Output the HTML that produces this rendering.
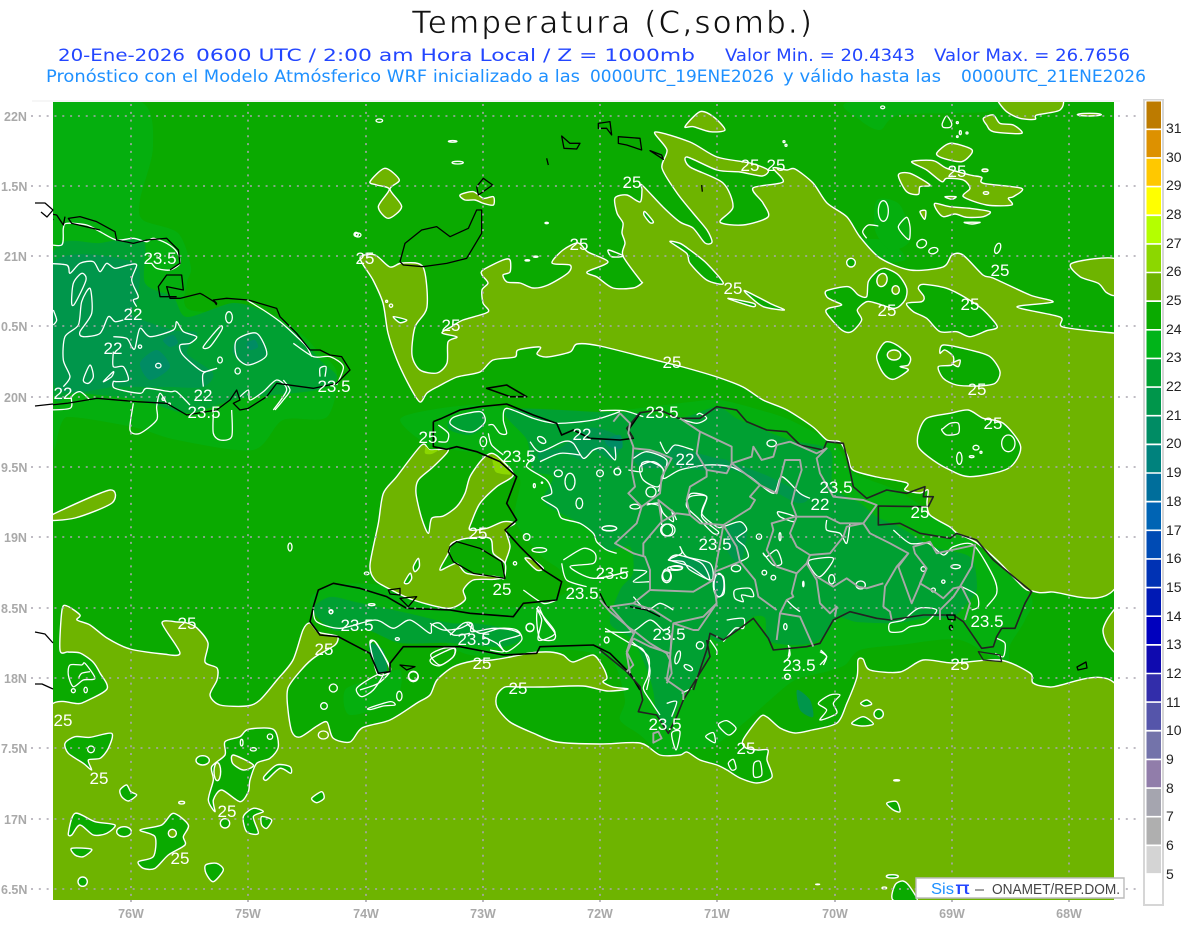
<!DOCTYPE html>
<html><head><meta charset="utf-8"><title>Temperatura</title>
<style>
html,body{margin:0;padding:0;background:#fff;width:1200px;height:927px;overflow:hidden}
svg{display:block}
svg *{vector-effect:non-scaling-stroke}
text{font-family:"Liberation Sans",sans-serif;white-space:pre}
.t{font-family:"DejaVu Sans",sans-serif}
.o{fill:#6eb400;stroke:#fff;stroke-width:1.4;stroke-linejoin:round}
.g{fill:#0aaa00;stroke:#fff;stroke-width:1.4;stroke-linejoin:round}
.w{fill:none;stroke:#fff;stroke-width:1.3;stroke-linejoin:round}
.k{fill:none;stroke:#000;stroke-width:1.3;stroke-linejoin:round}
.p{fill:none;stroke:#a8a8a8;stroke-width:1.9;stroke-linejoin:round}
.l{fill:#fff;font-size:17px;text-anchor:middle}
.a{fill:#a9a9a9;font-size:12.5px;font-weight:bold}
.c{fill:#222;font-size:14px}
</style></head><body>
<svg width="1200" height="927" viewBox="0 0 1200 927" xmlns="http://www.w3.org/2000/svg">
<rect width="1200" height="927" fill="#fff"/>
<text class="t" x="412" y="33" font-size="31" fill="#111" stroke="#fff" stroke-width=".7" textLength="400" lengthAdjust="spacing">Temperatura (C,somb.)</text>
<g class="t" font-size="17" fill="#2346ff">
<text class="t" x="58" y="61" textLength="127" lengthAdjust="spacingAndGlyphs">20-Ene-2026</text>
<text class="t" x="196" y="61" textLength="499" lengthAdjust="spacingAndGlyphs">0600 UTC / 2:00 am Hora Local / Z = 1000mb</text>
<text class="t" x="725" y="61" textLength="190" lengthAdjust="spacingAndGlyphs">Valor Min. = 20.4343</text>
<text class="t" x="934" y="61" textLength="196" lengthAdjust="spacingAndGlyphs">Valor Max. = 26.7656</text>
</g>
<g class="t" font-size="16.5" fill="#1e90ff">
<text class="t" x="46" y="82" textLength="534" lengthAdjust="spacingAndGlyphs">Pronóstico con el Modelo Atmósferico WRF inicializado a las</text>
<text class="t" x="590" y="82" textLength="184" lengthAdjust="spacingAndGlyphs">0000UTC_19ENE2026</text>
<text class="t" x="783" y="82" textLength="158" lengthAdjust="spacingAndGlyphs">y válido hasta las</text>
<text class="t" x="961" y="82" textLength="185" lengthAdjust="spacingAndGlyphs">0000UTC_21ENE2026</text>
</g>
<line x1="32" y1="101" x2="1120" y2="101" stroke="#eee"/>
<defs><clipPath id="m"><rect x="53" y="102" width="1061" height="798"/></clipPath></defs>
<g clip-path="url(#m)">
<rect x="53" y="102" width="1061" height="798" fill="#0aaa00"/>

<!-- shaded layers -->
<g fill="#05af0e">
<polygon points="53,102 141,102 153,147 140,200 143,220 178,233 191,267 187,283 190,310 267,313 300,333 317,350 337,373 327,417 283,420 253,450 177,440 133,427 67,417 53,433"/>
<polygon points="400,420 430,410 480,405 540,412 580,415 625,410 690,402 720,400 760,410 790,420 835,445 850,470 870,480 905,495 975,545 1030,595 1025,620 1010,645 1005,665 960,640 900,645 860,650 845,665 825,672 795,680 770,700 745,722 715,745 690,750 670,760 640,735 620,720 625,700 615,665 600,655 570,650 530,655 470,655 440,640 400,630 340,630 320,620 310,600 330,585 380,585 420,600 470,610 530,605 570,590 560,570 540,555 515,520 520,480 500,465 490,455 430,445"/>
<polygon points="770,190 800,195 810,230 830,240 885,240 905,260 860,262 840,240 790,240 775,220"/>
<polygon points="850,102 990,102 985,112 900,115 880,130 860,120"/>
<polygon points="770,300 800,300 820,325 790,340 775,330"/>
<polygon points="877,200 900,205 910,240 890,250 875,230"/>
<polygon points="345,690 370,680 400,670 395,700 350,715"/>
</g>
<g fill="#00a032">
<polygon points="53,253 100,243 143,240 145,283 173,297 187,317 233,303 267,313 300,337 320,360 337,377 317,390 253,397 233,400 187,413 140,400 77,393 53,393"/>
<polygon points="450,420 480,410 485,425 470,435 450,430"/>
<polygon points="507,410 527,440 533,470 553,477 543,500 560,513 580,523 593,533 607,550 630,547 633,573 620,590 610,623 633,640 647,670 653,690 657,713 667,730 680,700 690,687 707,657 710,637 720,642 740,627 753,617 765,618 768,640 790,645 813,643 827,633 837,617 857,622 897,623 930,617 953,617 970,600 977,587 970,557 933,547 900,527 877,517 860,503 833,487 830,450 790,440 740,420 717,407 680,418 640,413 600,412"/>
<polygon points="313,610 330,597 360,603 407,613 450,623 473,623 513,630 520,640 500,647 450,643 400,643 367,630 333,630"/>
</g>
<g fill="#00964b">
<polygon points="53,263 133,262 138,297 133,315 173,330 197,333 187,353 213,373 203,387 170,387 143,387 113,387 77,392 53,380"/>
<polygon points="237,340 257,333 267,353 248,365 233,353"/>
<polygon points="540,460 540,450 560,448 587,428 613,433 622,443 613,460 593,450 583,460 563,453"/>
<polygon points="633,453 662,453 667,467 640,467"/>
<polygon points="673,453 697,457 727,460 727,473 703,470 677,467"/>
<polygon points="673,445 697,453 733,463 770,477 807,497 797,503 767,487 733,470 700,470 670,457"/>
<polygon points="727,527 740,523 747,533 740,563 727,550"/>
<polygon points="670,560 687,557 710,563 712,580 690,570"/>
<polygon points="713,573 723,577 722,597 713,590"/>
<polygon points="797,690 810,700 813,717 800,710"/>
<polygon points="370,643 383,650 387,670 378,673 370,653"/>
</g>
<g fill="#008c64">
<polygon points="140,363 157,350 170,367 150,380"/>
<polygon points="163,340 173,335 178,343 170,347"/>
<polygon points="247,343 255,340 258,347 250,350"/>
<polygon points="605,440 620,435 622,448 610,447"/>
</g>

<!-- north body olive -->
<polygon class="o" points="360,258 373,280 383,303 388,333 397,360 410,387 420,402 427,393 437,387 457,377 480,372 493,360 515,357 518,350 540,347 537,354 547,357 570,352 577,344 600,346 663,362 683,367 717,377 743,387 763,400 787,410 813,427 827,440 840,442 848,457 853,470 877,477 907,483 905,490 920,493 928,490 927,503 930,515 950,527 957,533 977,543 1000,563 1023,587 1032,591 1050,592 1120,578 1120,333 1113,333 1063,327 1060,317 1017,307 1053,302 1030,295 993,278 983,275 963,255 952,255 943,267 910,270 880,258 860,237 847,217 827,203 813,183 795,169 787,170 773,168 783,182 753,188 763,203 768,217 743,225 720,222 733,207 723,183 690,167 687,157 717,170 740,172 762,176 768,170 750,163 717,157 690,142 655,132 667,150 662,168 677,193 693,213 707,230 712,242 705,243 693,228 680,222 663,207 642,185 642,190 640,202 627,195 615,198 617,213 623,223 622,233 625,243 623,256 640,280 642,283 633,288 613,288 597,277 587,272 608,262 588,252 578,243 563,250 552,263 570,265 568,273 548,285 533,288 520,283 507,282 503,275 510,272 510,260 503,260 483,270 482,275 488,283 482,290 483,303 488,312 463,320 451,327 442,333 457,337 448,342 447,363 437,373 420,370 412,355 415,327 427,307 423,267 402,263 390,267 375,255"/>
<g transform="translate(340,100) scale(.33333)">
<polygon class="g" points="990,425 1040,460 1050,490 1100,540 1150,550 1100,490 1050,450 1020,430"/>
<polygon class="g" points="1215,572 1290,610 1333,630 1270,620 1230,590"/>
<polygon class="g" points="1165,595 1240,610 1240,620 1190,605"/>
<polygon class="g" points="915,335 940,365 930,368 912,345"/>
<polygon class="g" points="160,650 200,660 180,668"/>
<polygon class="g" points="805,450 850,468 815,470"/>
<polygon class="o" points="1035,80 1080,35 1120,50 1155,90 1110,95 1060,80"/>
<polygon class="o" points="90,245 135,205 178,240 150,268 185,320 145,355 115,320 148,268 110,255"/>
<polygon class="o" points="360,285 400,275 430,295 460,290 460,315 430,310 405,300 375,300"/>
<ellipse class="w" cx="118" cy="62" rx="10" ry="5"/><ellipse class="w" cx="338" cy="124" rx="13" ry="2.5"/><ellipse class="w" cx="353" cy="188" rx="17" ry="4"/><circle class="w" cx="48" cy="403" r="6"/><ellipse class="w" cx="620" cy="369" rx="5" ry="2"/><ellipse class="w" cx="587" cy="470" rx="7" ry="2"/><ellipse class="w" cx="562" cy="481" rx="7" ry="2"/><circle class="w" cx="153" cy="617" r="5"/><circle class="w" cx="140" cy="604" r="3"/>
<polygon class="k" points="665,108 690,130 720,130 710,147 672,145"/>
<polyline class="k" points="620,175 625,195"/><polygon class="k" points="410,260 430,235 458,255 415,285"/>
<polygon class="k" points="180,485 195,430 245,390 290,380 330,410 385,385 410,330 425,330 425,400 380,475 320,490 250,500 190,495"/>
<polygon class="k" points="775,70 810,65 815,105 800,85 775,85"/><polygon class="k" points="835,110 900,115 905,150 860,135 835,130"/><polygon class="k" points="930,152 965,165 970,178"/>
<polyline class="k" points="1085,255 1087,275"/>
<polygon class="k" points="440,865 500,855 560,890 510,890" style="stroke-width:1.6"/>
</g>
<g transform="translate(770,100) scale(.33333)">
<polygon class="g" points="170,572 235,560 265,585 290,590 295,545 320,515 345,505 385,525 410,565 405,600 375,625 320,610 290,605 262,630 275,660 245,695 215,690 170,640 175,625 215,615 185,600 170,590"/>
<ellipse class="o" cx="336" cy="540" rx="15" ry="20" transform="rotate(15 336 540)"/><ellipse class="o" cx="377" cy="570" rx="11" ry="13"/>
<polygon class="g" points="410,610 455,605 462,590 445,565 460,553 530,565 590,595 640,630 682,680 650,692 600,710 560,695 510,695 470,655 430,635"/>
<polygon class="g" points="320,770 345,727 380,735 420,770 415,795 390,800 415,810 370,838 340,820"/>
<ellipse class="o" cx="372" cy="765" rx="20" ry="15"/>
<polygon class="g" points="510,760 520,735 600,750 660,770 690,815 675,850 625,858 560,855 520,835 505,800 545,795 550,770 525,750"/>
<polygon class="o" points="548,790 570,780 565,800"/>
<polygon class="o" points="905,490 1040,478 1040,580 1010,578 985,550 930,530"/>
<polygon class="o" points="685,5 685,-10 865,-10 870,30 800,45 795,58 750,55 710,35"/>
<polygon class="o" points="640,55 670,45 690,70 730,75 755,100 670,95 650,75"/>
<polygon class="o" points="500,160 540,130 600,145 605,160 575,185 520,175"/>
<polygon class="o" points="425,185 490,182 530,205 600,225 635,232 640,250 755,265 730,290 715,295 725,315 650,315 580,290 600,265 580,240 530,235 515,245 470,210"/>
<polygon class="o" points="385,225 420,220 480,255 450,260 445,283 410,275"/>
<polygon class="o" points="495,310 540,320 600,325 660,335 640,350 590,352 555,342 520,350 500,330"/>
<polygon class="o" points="525,290 558,290 545,298"/><polygon class="o" points="450,335 467,332 464,358"/>
<polygon class="o" points="583,367 630,367 605,372"/>
<ellipse class="o" cx="645" cy="211" rx="9" ry="4"/><ellipse class="o" cx="648" cy="279" rx="8" ry="4"/>
<ellipse class="o" cx="958" cy="44" rx="36" ry="4"/>
<circle class="g" cx="243" cy="488" r="13"/>
<ellipse class="w" cx="340" cy="333" rx="15" ry="31"/>
<polygon class="w" points="385,380 410,352 420,380 418,418 400,405"/>
<polyline class="w" points="290,415 278,395 295,375 325,378"/>
<ellipse class="w" cx="455" cy="431" rx="15" ry="12" transform="rotate(-25 455 431)"/>
<ellipse class="w" cx="490" cy="452" rx="14" ry="9" transform="rotate(-15 490 452)"/>
<polygon class="w" points="517,70 530,48 545,70 540,82 520,82"/>
<ellipse class="w" cx="683" cy="445" rx="8" ry="16" transform="rotate(20 683 445)"/>
<circle class="w" cx="562" cy="68" r="3"/><ellipse class="w" cx="571" cy="98" rx="3" ry="6"/><circle class="w" cx="591" cy="99" r="3"/><circle class="w" cx="562" cy="110" r="2.5"/><circle class="w" cx="42" cy="125" r="3"/><circle class="w" cx="48" cy="136" r="3"/><ellipse class="w" cx="338" cy="22" rx="6" ry="4"/>
</g>

<!-- Haiti NW olive -->
<g transform="translate(300,390) scale(.33333)">
<polygon class="o" points="365,165 390,180 445,180 400,230 355,270 348,310 365,385 385,430 395,385 430,378 470,350 495,310 510,260 545,210 575,190 605,210 640,255 590,290 540,340 515,395 510,420 560,415 610,395 645,400 618,420 630,470 615,520 612,560 580,568 520,570 490,600 495,630 445,655 340,630 265,595 225,570 210,525 235,400 250,310 290,260"/>
<polygon class="g" points="420,540 445,490 455,460 500,445 570,445 580,490 615,520 612,565 590,560 500,550 470,520"/>
<polygon fill="#8cd700" points="578,200 605,215 635,252 590,248 580,225"/>
<polygon fill="#8cd700" points="378,170 390,180 415,180 395,192 375,190"/>
<polygon class="g" points="340,530 355,505 358,530 345,545"/><polygon class="g" points="313,578 330,550 335,565 325,580"/>
<polygon class="o" points="675,505 700,510 730,535 710,540"/>
<ellipse class="w" cx="200" cy="550" rx="7" ry="4"/>
</g>

<!-- South body olive -->
<polygon class="o" points="45,718 82,703 107,689 100,673 93,662 80,653 68,652 60,650 62,610 67,606 80,615 77,620 90,625 107,638 130,649 163,654 180,653 162,623 178,622 187,623 197,628 208,643 205,662 217,668 217,680 210,695 220,705 247,706 260,700 277,680 293,660 303,630 310,623 318,632 333,635 338,637 335,645 315,657 303,668 288,688 288,710 292,732 300,737 317,726 327,722 333,738 350,742 362,728 390,720 417,703 430,695 437,680 453,667 473,661 492,660 510,657 530,653 550,652 563,655 573,662 593,655 603,667 607,678 603,682 613,687 628,689 607,691 583,686 543,687 518,687 505,687 497,695 497,707 510,722 533,733 557,742 600,744 640,743 660,755 680,755 687,752 700,760 717,765 727,770 740,778 757,783 772,777 767,760 768,750 758,750 746,748 743,740 760,717 767,717 780,728 795,733 812,730 837,723 847,703 857,677 858,660 863,659 870,670 900,672 923,660 953,663 1000,660 1030,673 1033,683 1050,687 1120,692 1120,905 45,905"/>
<polygon class="o" points="1120,608 1110,615 1103,630 1108,645 1120,653"/>
<polygon class="o" points="45,520 62,510 110,490 112,503 75,518"/>
<polygon class="g" points="893,900 895,885 903,881 910,887 917,902"/>
<ellipse class="w" cx="290" cy="547" rx="2" ry="4"/><ellipse class="w" cx="358" cy="235" rx="3" ry="2"/>

<g transform="translate(40,600) scale(.33333)">
<polygon class="g" points="75,430 105,410 150,412 215,400 205,445 180,475 145,480 155,510 130,490 85,460"/>
<polygon class="g" points="240,570 260,555 272,575 290,585 265,603 245,590"/>
<polygon class="g" points="515,500 555,465 555,425 600,410 625,388 700,388 715,440 690,475 650,490 630,540 625,575 600,605 545,570 520,600 525,635 505,600 520,540"/>
<polygon class="o" points="580,465 640,495 610,510 578,490"/>
<ellipse class="o" cx="532" cy="515" rx="10" ry="27"/>
<ellipse class="g" cx="488" cy="481" rx="20" ry="14"/>
<polygon class="g" points="672,530 710,495 750,500 752,520 720,505 680,540"/>
<polygon class="g" points="815,595 845,575 852,595 830,608"/>
<polygon class="g" points="610,650 640,625 670,635 640,650 655,700 620,695"/>
<polygon class="g" points="665,650 695,660 680,685 665,675"/>
<circle class="g" cx="555" cy="670" r="14"/>
<polygon class="g" points="85,700 105,640 165,665 225,675 200,700 160,705 120,675 95,705"/>
<ellipse class="g" cx="252" cy="695" rx="22" ry="15"/>
<polygon class="g" points="95,745 155,748 130,770 105,765"/>
<circle class="g" cx="128" cy="845" r="14"/>
<polygon class="g" points="300,690 365,675 400,640 445,675 430,710 435,735 385,765 345,805 310,805 295,785 340,770 345,710"/>
<circle class="o" cx="397" cy="700" r="12"/>
<polygon class="g" points="497,795 530,790 550,810 520,845 498,820"/>
<ellipse class="w" cx="153" cy="448" rx="10" ry="10"/><ellipse class="w" cx="640" cy="448" rx="9" ry="5"/><ellipse class="w" cx="690" cy="410" rx="8" ry="8"/><ellipse class="w" cx="605" cy="428" rx="4" ry="10"/><ellipse class="w" cx="425" cy="608" rx="9" ry="4"/><ellipse class="w" cx="850" cy="405" rx="15" ry="12"/><circle class="w" cx="852" cy="318" r="10"/><ellipse class="w" cx="880" cy="264" rx="12" ry="12"/><circle class="w" cx="1120" cy="230" r="15"/>
<polygon class="w" points="985,325 1050,305 1065,315 1030,318 995,328"/><ellipse class="w" cx="1078" cy="288" rx="8" ry="14"/>
<polygon class="w" points="950,265 1000,230 1030,222 1000,270 965,290"/>
<polygon class="w" points="1175,175 1240,145 1240,170 1200,197 1175,190"/>
<polygon class="w" points="990,125 1010,130 1050,210 1015,225 1000,180"/>
<polyline class="w" points="820,30 830,65 900,85 1005,60 1060,85 1110,60 1170,100 1175,75 1200,70 1240,105 1290,100"/>
<ellipse class="w" cx="873" cy="36" rx="5" ry="5"/>
<polygon class="w" points="90,195 125,195 135,190 165,235 130,240 100,260 85,225"/>
<polyline class="w" points="115,235 125,220 150,215"/>
<circle class="w" cx="100" cy="272" r="6"/><ellipse class="w" cx="137" cy="270" rx="5" ry="8"/>
</g>

<g transform="translate(450,600) scale(.33333)">
<polygon class="g" points="1205,370 1240,350 1270,372 1235,378"/>
<polygon class="g" points="1232,310 1250,300 1265,312 1245,318"/>
<circle class="g" cx="1286" cy="342" r="14"/>
<polygon class="g" points="1310,610 1340,605 1350,635 1330,630"/>
<ellipse class="g" cx="1327" cy="829" rx="18" ry="5"/>
<ellipse class="w" cx="1303" cy="864" rx="7" ry="3"/><ellipse class="w" cx="1340" cy="541" rx="9" ry="2"/><ellipse class="w" cx="1103" cy="853" rx="6" ry="1"/>
<polygon class="w" points="1105,310 1140,285 1170,285 1150,310 1160,340 1110,360 1130,330"/>
<polygon class="w" points="805,375 830,362 858,385 835,405"/>
<polygon class="w" points="767,410 790,398 795,428"/>
<polygon class="w" points="835,490 850,478 858,505 845,510"/>
<polygon class="w" points="912,490 930,485 935,525 912,530"/>
<polygon class="w" points="665,400 690,395 678,450"/>
<ellipse class="w" cx="470" cy="120" rx="7" ry="9"/>
<circle class="w" cx="240" cy="82" r="12"/><circle class="w" cx="750" cy="136" r="11"/>
<ellipse class="w" cx="683" cy="172" rx="7" ry="20" transform="rotate(15 683 172)"/>
<ellipse class="w" cx="715" cy="203" rx="14" ry="7" transform="rotate(30 715 203)"/>
<polygon class="w" points="260,25 285,55 315,100 265,120 275,60"/>
<polyline class="w" points="0,105 40,70 65,70 65,95 130,85 185,90 210,105 150,125 160,155 120,150"/>
<polyline class="w" points="465,95 545,95 600,60 640,90 660,80"/>
<polyline class="w" points="545,125 595,170 595,225 580,265 600,300 630,345"/>
<polyline class="w" points="650,310 680,305 665,350"/>
<polyline class="w" points="695,280 725,265"/>
<polyline class="w" points="780,120 800,150 800,165"/>
<polyline class="w" points="830,60 880,55 880,85 855,85 820,125"/>
<polyline class="w" points="1015,135 1020,165 1005,185"/><polyline class="w" points="1112,150 1130,170 1120,195"/><circle class="w" cx="1012" cy="230" r="8"/>
</g>

<!-- East blob -->
<g transform="translate(600,390) scale(.33333)">
<polygon class="g" points="955,130 980,85 1050,70 1105,60 1150,85 1210,100 1262,170 1225,235 1110,260 1040,235 985,200 955,170"/>
<polygon class="w" points="1030,115 1050,100 1075,100 1075,130 1040,135 1025,120"/>
<ellipse class="w" cx="1225" cy="160" rx="20" ry="25"/>
<ellipse class="w" cx="1078" cy="205" rx="8" ry="18"/>
<ellipse class="w" cx="1128" cy="173" rx="9" ry="7"/><ellipse class="w" cx="1115" cy="200" rx="7" ry="3"/><circle class="w" cx="1143" cy="187" r="3"/>
<polyline class="w" points="0,62 70,62 130,80"/>
<polyline class="w" points="235,85 290,100 320,85 300,70 290,75"/>
<polyline class="w" points="180,155 200,190 225,165 280,180"/>
<polyline class="w" points="100,205 140,185 200,210 190,265 240,240 320,225 390,230 450,260 520,310 545,260 600,310 630,325"/>
<polyline class="w" points="85,240 125,245 125,220 150,215 190,240 175,305"/>
<circle class="w" cx="153" cy="306" r="15"/><ellipse class="w" cx="52" cy="245" rx="10" ry="10"/>
<polyline class="w" points="140,345 175,340 190,370 220,395 215,360 230,390"/>
<ellipse class="w" cx="205" cy="420" rx="20" ry="18"/><ellipse class="w" cx="105" cy="350" rx="15" ry="7"/><ellipse class="w" cx="28" cy="415" rx="22" ry="8"/>
<polyline class="w" points="260,330 275,310 320,320 305,370 350,410 370,410 420,395 440,420 410,445 435,470 445,500 420,515"/>
<polygon class="w" points="205,510 245,490 240,470 260,500 330,520 335,570 270,540 250,515"/>
<ellipse class="w" cx="200" cy="560" rx="14" ry="18"/><ellipse class="w" cx="230" cy="533" rx="18" ry="6"/><ellipse class="w" cx="408" cy="535" rx="14" ry="10"/>
<polygon class="w" points="345,555 370,560 372,610 350,620 340,590"/>
<polygon class="w" points="405,600 450,595 460,620 425,615 430,635 405,625"/>
<polygon class="w" points="500,500 530,480 545,520 520,525 490,490"/>
<polygon class="w" points="535,365 585,380 580,395 540,380"/>
<polygon class="w" points="630,510 700,505 660,560 630,530"/>
<polyline class="w" points="680,390 680,420 720,430 740,460 750,400"/>
<polyline class="w" points="880,420 930,460 985,460 1030,495 1060,470 1120,465 1180,560 1190,610 1160,650"/>
<polyline class="w" points="1085,590 1130,615 1135,650 1115,660"/>
<polygon class="w" points="955,655 1010,660 975,700 930,710 905,725 870,725 870,700 910,690"/>
<ellipse class="w" cx="477" cy="440" rx="8" ry="8"/><ellipse class="w" cx="540" cy="440" rx="3" ry="12"/><ellipse class="w" cx="610" cy="582" rx="2" ry="8"/><circle class="w" cx="520" cy="563" r="7"/><circle class="w" cx="493" cy="548" r="7"/><ellipse class="w" cx="695" cy="568" rx="9" ry="14"/><ellipse class="w" cx="782" cy="585" rx="14" ry="12"/><circle class="w" cx="970" cy="537" r="7"/><ellipse class="w" cx="1067" cy="530" rx="14" ry="6"/><circle class="w" cx="1030" cy="575" r="5"/><circle class="w" cx="1000" cy="600" r="6"/><ellipse class="w" cx="556" cy="710" rx="5" ry="9"/><ellipse class="w" cx="515" cy="160" rx="14" ry="10"/><circle class="w" cx="563" cy="860" r="8"/>
<polyline class="w" points="560,630 580,650 600,665"/><polyline class="w" points="570,770 565,800"/><polyline class="w" points="660,785 680,800 660,825"/><polyline class="w" points="1190,745 1215,760 1210,800 1185,790"/>
</g>

<!-- West Haiti white -->
<g transform="translate(300,390) scale(.33333)">
<polygon class="w" points="450,100 465,80 540,65 555,95 520,125 480,120"/>
<polyline class="w" points="565,105 580,105 600,130 620,130 610,90 620,55 700,85 770,100 880,90 960,65"/>
<polyline class="w" points="415,105 445,130 440,155 415,155"/>
<ellipse class="w" cx="550" cy="155" rx="10" ry="15"/>
<polyline class="w" points="565,130 575,165 610,195"/>
<polyline class="w" points="705,200 680,230 740,270 755,310 725,325 770,355 785,385 840,400 880,430 890,455 920,480 950,490"/>
<polyline class="w" points="690,155 720,185 790,155 820,160 850,205 880,180 910,175 945,210 945,170"/>
<polyline class="w" points="720,215 780,190 840,195"/>
<circle class="w" cx="900" cy="250" r="10"/><circle class="w" cx="952" cy="245" r="10"/><ellipse class="w" cx="775" cy="250" rx="12" ry="10"/><ellipse class="w" cx="810" cy="275" rx="15" ry="25"/><ellipse class="w" cx="838" cy="340" rx="10" ry="16"/><ellipse class="w" cx="928" cy="415" rx="22" ry="7"/><circle class="w" cx="680" cy="441" r="10"/><ellipse class="w" cx="718" cy="480" rx="22" ry="7"/><circle class="w" cx="645" cy="520" r="5"/><ellipse class="w" cx="703" cy="287" rx="3" ry="6"/><circle class="w" cx="726" cy="278" r="2"/><ellipse class="w" cx="725" cy="150" rx="14" ry="8" transform="rotate(35 725 150)"/><ellipse class="w" cx="215" cy="644" rx="10" ry="3"/><circle class="w" cx="93" cy="665" r="6"/><circle class="w" cx="690" cy="713" r="12"/><ellipse class="w" cx="292" cy="747" rx="6" ry="4"/><ellipse class="w" cx="920" cy="750" rx="7" ry="9"/>
<polyline class="w" points="790,510 850,475 885,490 880,520 810,530 880,565 985,545"/>
<polyline class="w" points="785,520 800,570 860,590"/>
<polyline class="w" points="1000,540 1040,545 1000,575 1050,575"/>
<polygon class="w" points="715,650 735,690 765,730 760,750 720,745 710,690"/>
<polyline class="w" points="670,600 730,640 770,630"/>
<polyline class="w" points="500,700 540,730 600,715 650,720 665,750 620,785 590,760 550,740"/>
<polyline class="w" points="390,700 430,720 480,715 515,700 520,725"/>
<polygon class="w" points="392,795 430,775 465,775 460,800 420,825"/>
<circle class="w" cx="340" cy="858" r="14"/>
<polyline class="w" points="210,760 225,755 265,820 270,845 235,880 180,900"/>
<polyline class="w" points="1000,620 1040,660 1080,640 1120,660"/>
<polyline class="w" points="915,715 990,760 1030,780 1050,840 1040,900"/>
<ellipse class="w" cx="1100" cy="555" rx="12" ry="18"/><ellipse class="w" cx="1125" cy="535" rx="22" ry="6"/><polygon class="w" points="1133,495 1205,520 1228,570 1170,530 1110,510"/>
<ellipse class="w" cx="1257" cy="585" rx="15" ry="35"/><circle class="w" cx="1100" cy="420" r="18"/>
<polygon class="w" points="1170,320 1220,320 1205,380 1255,425 1240,430 1195,385 1160,350"/>
<polygon class="w" points="1020,230 1060,215 1090,240 1075,290 1030,270"/><polyline class="w" points="1040,340 1080,350 1085,405"/>
</g>

<!-- Cuba white -->
<g transform="translate(0,200) scale(.33333)">
<polyline class="w" points="130,190 200,195 210,220 240,190 280,185 300,215 320,190 345,205 385,195 410,195 395,240 415,290 400,300 410,320"/>
<polyline class="w" points="370,360 345,365 325,350 300,400 250,410 240,395 275,340 270,265 245,305 235,375 195,410 190,480 210,530 190,560"/>
<polygon class="w" points="215,310 220,250 245,220 258,240 225,310"/>
<polyline class="w" points="130,130 185,135 190,85 200,70 260,75 300,95 350,120 400,115 440,125 460,115 500,130 530,155 540,190 510,210 470,205 455,190"/>
<polyline class="w" points="160,330 170,360 160,375"/>
<polyline class="w" points="340,410 380,415 395,440 405,445 420,385 450,410 520,390 530,365 550,395 590,410 570,430 540,435 545,460 575,490 610,515 650,505 610,520 610,560"/>
<polyline class="w" points="340,455 340,500 370,500 385,540 350,545 340,545 345,565 420,580 440,565 510,575 530,575 570,615"/>
<polygon class="w" points="310,545 340,515 335,530"/><polygon class="w" points="250,540 270,495 280,530 265,550"/>
<circle class="w" cx="420" cy="440" r="5"/><ellipse class="w" cx="475" cy="497" rx="8" ry="7"/><ellipse class="w" cx="687" cy="352" rx="10" ry="17"/><polygon class="w" points="610,440 660,380 665,390 630,440"/><ellipse class="w" cx="660" cy="480" rx="7" ry="9"/><ellipse class="w" cx="713" cy="513" rx="8" ry="9"/>
<polygon class="w" points="710,420 770,400 800,465 745,495 710,470"/>
<polyline class="w" points="400,610 390,690 420,700 470,660 470,620 480,580 500,610"/>
<polyline class="w" points="640,640 640,700 660,720 695,710 695,630"/>
<polyline class="w" points="130,630 210,625 215,590 240,575 270,600"/>
<polyline class="w" points="820,630 860,570 830,540 790,575 750,600 745,570 720,590"/>
<polyline class="w" points="850,540 870,570 850,600 825,630"/>
<polyline class="w" points="960,530 960,505 978,500 975,530"/>
<polyline class="w" points="880,430 940,470 990,470 1030,500 1010,555"/>
<polyline class="w" points="740,300 790,330 840,365 890,410 920,440 935,470"/>
<circle class="w" cx="490" cy="597" r="4"/><circle class="w" cx="508" cy="612" r="3"/><circle class="w" cx="1070" cy="103" r="5"/>
</g>

<!-- coast -->
<g transform="translate(300,390) scale(.33333)">
<polyline class="k" style="stroke-width:1.6" points="400,95 425,85 480,60 540,50 620,42 700,75 770,100 785,135 820,120 870,145 960,150 1000,145 985,120 1020,70"/>
<polyline class="k" style="stroke-width:1.6" points="400,95 400,170 440,178 470,170 530,185 600,215 650,260 620,340 650,390 615,420 660,470 730,540 785,575 770,630 670,640 640,680 510,670 450,660 320,655 260,620 180,595 100,580 55,600 40,650 30,695 60,735 115,740 210,790 235,850 270,845 270,820 310,770 420,770 480,770 610,795 710,790 720,770 880,765 930,790 990,850 1020,900"/>
<polygon class="k" points="450,470 470,455 540,475 605,515 615,565 520,550 460,515 445,485"/>
<polygon class="k" points="300,825 345,830 320,840"/>
<polygon class="k" points="265,600 300,595 300,615 270,612"/>
<polygon class="k" points="300,625 350,620 325,650"/>
<polyline class="k" points="900,610 920,650 935,655"/>
<polyline class="k" points="990,650 1040,660 1080,680"/>
</g>
<g transform="translate(600,390) scale(.33333)">
<polyline class="k" style="stroke-width:1.6;stroke:#222" points="100,145 80,115 120,68 180,60 235,85 300,85 350,50 410,60 440,95 500,120 560,125 600,165 670,180 680,155 730,160 745,220 760,290 800,325 860,300 920,310 975,290 970,320 1000,320 985,350 835,348 835,405 900,400 960,430 1050,445 1070,430 1130,450 1180,510 1295,605 1275,640 1245,715 1205,715 1190,740 1180,770 1145,775 1090,695 1060,675 970,675 870,690 830,685 750,665 700,690 660,760 620,770 520,780 505,745 460,685 420,715 370,750 330,730 320,780 280,900"/>
<polygon class="k" style="stroke:#222" points="1135,785 1200,795 1205,815 1150,810"/>
<polygon class="k" points="1040,675 1065,675 1065,690 1045,688"/><ellipse class="k" cx="1053" cy="713" rx="5" ry="7"/>
</g>
<g transform="translate(450,600) scale(.33333)">
<polyline class="k" style="stroke:#222;stroke-width:1.6" points="770,120 780,170 700,300 680,350 655,400 620,345 565,335 578,300 570,260 530,215 450,150"/>
<polygon class="p" points="610,400 625,395 635,415 610,428"/>
<polyline class="p" points="450,0 480,35 540,85 555,95 540,125 530,155 550,195 530,215"/>
<polyline class="p" points="555,95 600,130 650,160 660,180 650,240 700,275 700,300"/>
<polyline class="p" points="665,100 660,180"/>
</g>
<g transform="translate(0,200) scale(.33333)">
<polyline class="k" points="105,620 200,610 290,595 410,605 500,610 560,645 650,630 690,600 710,570 720,600 700,610 720,630 745,625 800,590 830,550 940,565 1010,550 1050,510 1025,470 990,465 960,450 930,450 890,400 840,350 830,325 745,300 680,295 640,300 650,310 610,285 600,280 540,295 510,295 500,260 550,270 545,225 500,225 475,260 480,290 530,290"/>
<polyline class="k" points="510,210 540,190 535,150 500,115 440,120 400,130 350,120 345,95 290,65 240,50 205,55 215,70 300,90"/>
<polyline class="k" points="195,50 190,75 170,45 140,40 160,60"/>
<polyline class="k" points="640,300 650,315"/>
</g>
<polygon class="k" points="1077,667 1086,662 1087,668 1078,670"/>

<!-- provinces -->
<g transform="translate(600,390) scale(.33333)">
<polyline class="p" points="60,70 90,100 85,130 100,170 95,240 105,290 85,310 125,350 110,400 45,460 100,490 135,500 150,540 150,600 100,640 30,650"/>
<polyline class="p" points="130,500 130,460 185,395 230,370 270,375 300,400 370,405 450,355 465,330 450,320 480,285 395,220 395,170 300,125 240,85"/>
<polyline class="p" points="100,175 150,180 180,190 215,205 185,260 180,310 125,350"/>
<polyline class="p" points="185,395 175,330 225,370"/>
<polyline class="p" points="300,125 290,190 320,240 380,250 395,220 455,200 460,170 485,210 520,200 530,165 570,155"/>
<polyline class="p" points="270,375 260,330 270,290 320,260 320,240"/>
<polyline class="p" points="480,285 530,310 555,210 600,210 605,240 585,300 575,340 590,380 570,430 590,470 630,495 620,520 590,550 530,530 500,480 520,420 515,400 585,380 680,380 720,400 790,400 830,345 790,330 700,320 660,250 650,205 680,175 650,190 570,155"/>
<polyline class="p" points="630,495 690,490 730,440 740,410 790,400 810,430 870,460 925,490 890,530 855,590 850,650 870,665 875,690"/>
<polyline class="p" points="925,490 895,530 935,640 980,535 945,490 940,470 990,455 1010,490 1125,465 1115,530 1080,590 1060,620 1020,660 1020,690"/>
<polyline class="p" points="980,535 960,580 1010,610 1030,625 1060,595 1085,590 1110,640 1095,690"/>
<polyline class="p" points="620,520 650,570 660,640 690,670 710,650 705,680"/>
<polyline class="p" points="650,560 700,590 740,565 775,590 800,595 850,580"/>
<polyline class="p" points="590,550 575,610 580,620 560,630 540,670 530,750"/>
<polyline class="p" points="540,670 600,680 640,770"/>
<polyline class="p" points="150,600 280,605 340,570 345,545 370,405"/>
<polyline class="p" points="345,545 420,515 465,570 475,620 530,660"/>
<polyline class="p" points="420,515 410,470 370,405"/>
<polyline class="p" points="350,640 310,680 220,700 280,720 295,720 350,640 345,600"/>
<polyline class="p" points="100,640 160,660 215,695"/>
<polyline class="p" points="220,700 210,800 215,850 200,880"/>
<polyline class="p" points="100,745 150,770 210,790"/>
<polyline class="p" points="100,745 80,790 90,850"/>
<polyline class="p" points="60,70 40,95"/>
<polyline class="p" points="30,650 100,730"/>
</g>

<!-- grid -->
<g stroke="#aaa6b0" stroke-width="1.6" stroke-dasharray="2 5.82" fill="none">
<path d="M131 104V900M248 104V900M366 104V900M483 104V900M600 104V900M717 104V900M835 104V900M952 104V900M1069 104V900"/>
</g>
</g>

<g stroke="#aaa6b0" stroke-width="1.6" stroke-dasharray="2 5.82" fill="none">
<path d="M31 116H1136M31 186H1136M31 256H1136M31 326H1136M31 397H1136M31 467H1136M31 537H1136M31 608H1136M31 678H1136M31 748H1136M31 819H1136M31 889H1136"/>
<path d="M131 900V905M248 900V905M366 900V905M483 900V905M600 900V905M717 900V905M835 900V905M952 900V905M1069 900V905"/>
</g>
<polyline class="k" points="35,203 45,203 53,210 47,217 41,212"/>
<polyline class="k" points="35,406 53,404"/>
<polyline class="k" points="35,632 45,634 53,643"/>
<polyline class="k" points="35,684 42,684 53,689"/>

<!-- map contour labels -->
<g>
<text x="160" y="264" class="l">23.5</text><text x="133" y="320" class="l">22</text><text x="113" y="354" class="l">22</text><text x="203" y="401" class="l">22</text><text x="204" y="418" class="l">23.5</text><text x="63" y="399" class="l">22</text><text x="334" y="392" class="l">23.5</text><text x="365" y="264" class="l">25</text><text x="632" y="188" class="l">25</text><text x="579" y="250" class="l">25</text><text x="750" y="171" class="l">25</text><text x="776" y="171" class="l">25</text><text x="957" y="177" class="l">25</text><text x="1000" y="276" class="l">25</text><text x="970" y="310" class="l">25</text><text x="887" y="316" class="l">25</text><text x="733" y="294" class="l">25</text><text x="451" y="331" class="l">25</text><text x="672" y="368" class="l">25</text><text x="977" y="395" class="l">25</text><text x="993" y="429" class="l">25</text><text x="428" y="443" class="l">25</text><text x="662" y="418" class="l">23.5</text><text x="582" y="440" class="l">22</text><text x="685" y="465" class="l">22</text><text x="519" y="462" class="l">23.5</text><text x="836" y="493" class="l">23.5</text><text x="820" y="510" class="l">22</text><text x="920" y="518" class="l">25</text><text x="715" y="550" class="l">23.5</text><text x="478" y="539" class="l">25</text><text x="612" y="579" class="l">23.5</text><text x="582" y="599" class="l">23.5</text><text x="502" y="595" class="l">25</text><text x="357" y="631" class="l">23.5</text><text x="187" y="629" class="l">25</text><text x="324" y="655" class="l">25</text><text x="474" y="645" class="l">23.5</text><text x="669" y="640" class="l">23.5</text><text x="987" y="627" class="l">23.5</text><text x="799" y="671" class="l">23.5</text><text x="960" y="670" class="l">25</text><text x="482" y="669" class="l">25</text><text x="518" y="694" class="l">25</text><text x="63" y="726" class="l">25</text><text x="665" y="730" class="l">23.5</text><text x="746" y="754" class="l">25</text><text x="99" y="784" class="l">25</text><text x="227" y="817" class="l">25</text><text x="180" y="864" class="l">25</text>
</g>

<!-- axis -->
<text class="a" x="4" y="121">22N</text><text class="a" x="1" y="191">1.5N</text><text class="a" x="4" y="261">21N</text><text class="a" x="1" y="331">0.5N</text><text class="a" x="4" y="402">20N</text><text class="a" x="1" y="472">9.5N</text><text class="a" x="4" y="542">19N</text><text class="a" x="1" y="613">8.5N</text><text class="a" x="4" y="683">18N</text><text class="a" x="1" y="753">7.5N</text><text class="a" x="4" y="824">17N</text><text class="a" x="1" y="894">6.5N</text>
<text class="a" x="131" y="918" text-anchor="middle">76W</text><text class="a" x="248" y="918" text-anchor="middle">75W</text><text class="a" x="366" y="918" text-anchor="middle">74W</text><text class="a" x="483" y="918" text-anchor="middle">73W</text><text class="a" x="600" y="918" text-anchor="middle">72W</text><text class="a" x="717" y="918" text-anchor="middle">71W</text><text class="a" x="835" y="918" text-anchor="middle">70W</text><text class="a" x="952" y="918" text-anchor="middle">69W</text><text class="a" x="1069" y="918" text-anchor="middle">68W</text>

<!-- credit box -->
<rect x="916" y="878" width="208" height="20" fill="#fff" stroke="#bbb" stroke-width="1.4"/>
<text x="931" y="894" font-size="15.5" fill="#1e90ff" textLength="23" lengthAdjust="spacingAndGlyphs">Sis</text><text class="t" x="955" y="894" font-size="17" fill="#2346ff" textLength="15" lengthAdjust="spacingAndGlyphs">π</text>
<text x="975" y="894" font-size="15" fill="#444" textLength="9" lengthAdjust="spacingAndGlyphs">–</text>
<text x="992" y="894" font-size="14.5" fill="#444" textLength="128" lengthAdjust="spacingAndGlyphs">ONAMET/REP.DOM.</text>

<!-- legend -->
<rect x="1144" y="100" width="19" height="805" fill="#fff" stroke="#d6d6d6" stroke-width="2"/>
<g stroke="#fff" stroke-width="1">
<rect x="1146" y="101" width="15.5" height="28" fill="#bd7b00"/><rect x="1146" y="129.6" width="15.5" height="28" fill="#dd9100"/><rect x="1146" y="158.3" width="15.5" height="28" fill="#ffc800"/><rect x="1146" y="186.9" width="15.5" height="28" fill="#ffff00"/><rect x="1146" y="215.6" width="15.5" height="28" fill="#b4ff00"/><rect x="1146" y="244.2" width="15.5" height="28" fill="#8cd700"/><rect x="1146" y="272.8" width="15.5" height="28" fill="#6eb400"/><rect x="1146" y="301.5" width="15.5" height="28" fill="#0aaa00"/><rect x="1146" y="330.1" width="15.5" height="28" fill="#00b419"/><rect x="1146" y="358.8" width="15.5" height="28" fill="#00a032"/><rect x="1146" y="387.4" width="15.5" height="28" fill="#00964b"/><rect x="1146" y="416" width="15.5" height="28" fill="#008c64"/><rect x="1146" y="444.7" width="15.5" height="28" fill="#00827d"/><rect x="1146" y="473.3" width="15.5" height="28" fill="#006e9b"/><rect x="1146" y="502" width="15.5" height="28" fill="#0064b4"/><rect x="1146" y="530.6" width="15.5" height="28" fill="#004bb4"/><rect x="1146" y="559.2" width="15.5" height="28" fill="#0032b4"/><rect x="1146" y="587.9" width="15.5" height="28" fill="#0019b4"/><rect x="1146" y="616.5" width="15.5" height="28" fill="#0000be"/><rect x="1146" y="645.2" width="15.5" height="28" fill="#0f0aaf"/><rect x="1146" y="673.8" width="15.5" height="28" fill="#322daa"/><rect x="1146" y="702.4" width="15.5" height="28" fill="#5555aa"/><rect x="1146" y="731.1" width="15.5" height="28" fill="#7373aa"/><rect x="1146" y="759.7" width="15.5" height="28" fill="#917daa"/><rect x="1146" y="788.4" width="15.5" height="28" fill="#a5a5af"/><rect x="1146" y="817" width="15.5" height="28" fill="#afafaf"/><rect x="1146" y="845.6" width="15.5" height="28" fill="#d4d4d4"/><rect x="1146" y="874.3" width="15.5" height="28" fill="#fff"/>
</g>
<g>
<text class="c" x="1166" y="133">31</text><text class="c" x="1166" y="162">30</text><text class="c" x="1166" y="190">29</text><text class="c" x="1166" y="219">28</text><text class="c" x="1166" y="248">27</text><text class="c" x="1166" y="276">26</text><text class="c" x="1166" y="305">25</text><text class="c" x="1166" y="334">24</text><text class="c" x="1166" y="362">23</text><text class="c" x="1166" y="391">22</text><text class="c" x="1166" y="420">21</text><text class="c" x="1166" y="448">20</text><text class="c" x="1166" y="477">19</text><text class="c" x="1166" y="506">18</text><text class="c" x="1166" y="535">17</text><text class="c" x="1166" y="563">16</text><text class="c" x="1166" y="592">15</text><text class="c" x="1166" y="621">14</text><text class="c" x="1166" y="649">13</text><text class="c" x="1166" y="678">12</text><text class="c" x="1166" y="707">11</text><text class="c" x="1166" y="735">10</text><text class="c" x="1166" y="764">9</text><text class="c" x="1166" y="793">8</text><text class="c" x="1166" y="821">7</text><text class="c" x="1166" y="850">6</text><text class="c" x="1166" y="879">5</text>
</g>
</svg>
<script>
(function(){
var NS='http://www.w3.org/2000/svg',F=0.14;
var els=document.querySelectorAll('polygon,polyline');
for(var n=0;n<els.length;n++){
 var e=els[n],c=e.getAttribute('class')||'';
 if(c==='k'||c==='p')continue;
 var v=e.getAttribute('points').trim().split(/[\s,]+/).map(Number),P=[];
 for(var i=0;i<v.length;i+=2)P.push([v[i],v[i+1]]);
 var L=P.length;if(L<3)continue;
 var closed=e.tagName.toLowerCase()==='polygon';
 var g=function(i){return closed?P[(i+L)%L]:P[Math.max(0,Math.min(L-1,i))];};
 var d='M'+P[0][0]+' '+P[0][1],m=closed?L:L-1;
 for(var j=0;j<m;j++){
  var a=g(j-1),b=g(j),q=g(j+1),r=g(j+2);
  d+='C'+(b[0]+(q[0]-a[0])*F).toFixed(1)+' '+(b[1]+(q[1]-a[1])*F).toFixed(1)+' '+(q[0]-(r[0]-b[0])*F).toFixed(1)+' '+(q[1]-(r[1]-b[1])*F).toFixed(1)+' '+q[0]+' '+q[1];
 }
 if(closed)d+='Z';
 var p=document.createElementNS(NS,'path');
 for(var k=0;k<e.attributes.length;k++){var at=e.attributes[k];if(at.name!=='points')p.setAttribute(at.name,at.value);}
 p.setAttribute('d',d);
 e.parentNode.replaceChild(p,e);
}
})();
</script>
</body></html>
